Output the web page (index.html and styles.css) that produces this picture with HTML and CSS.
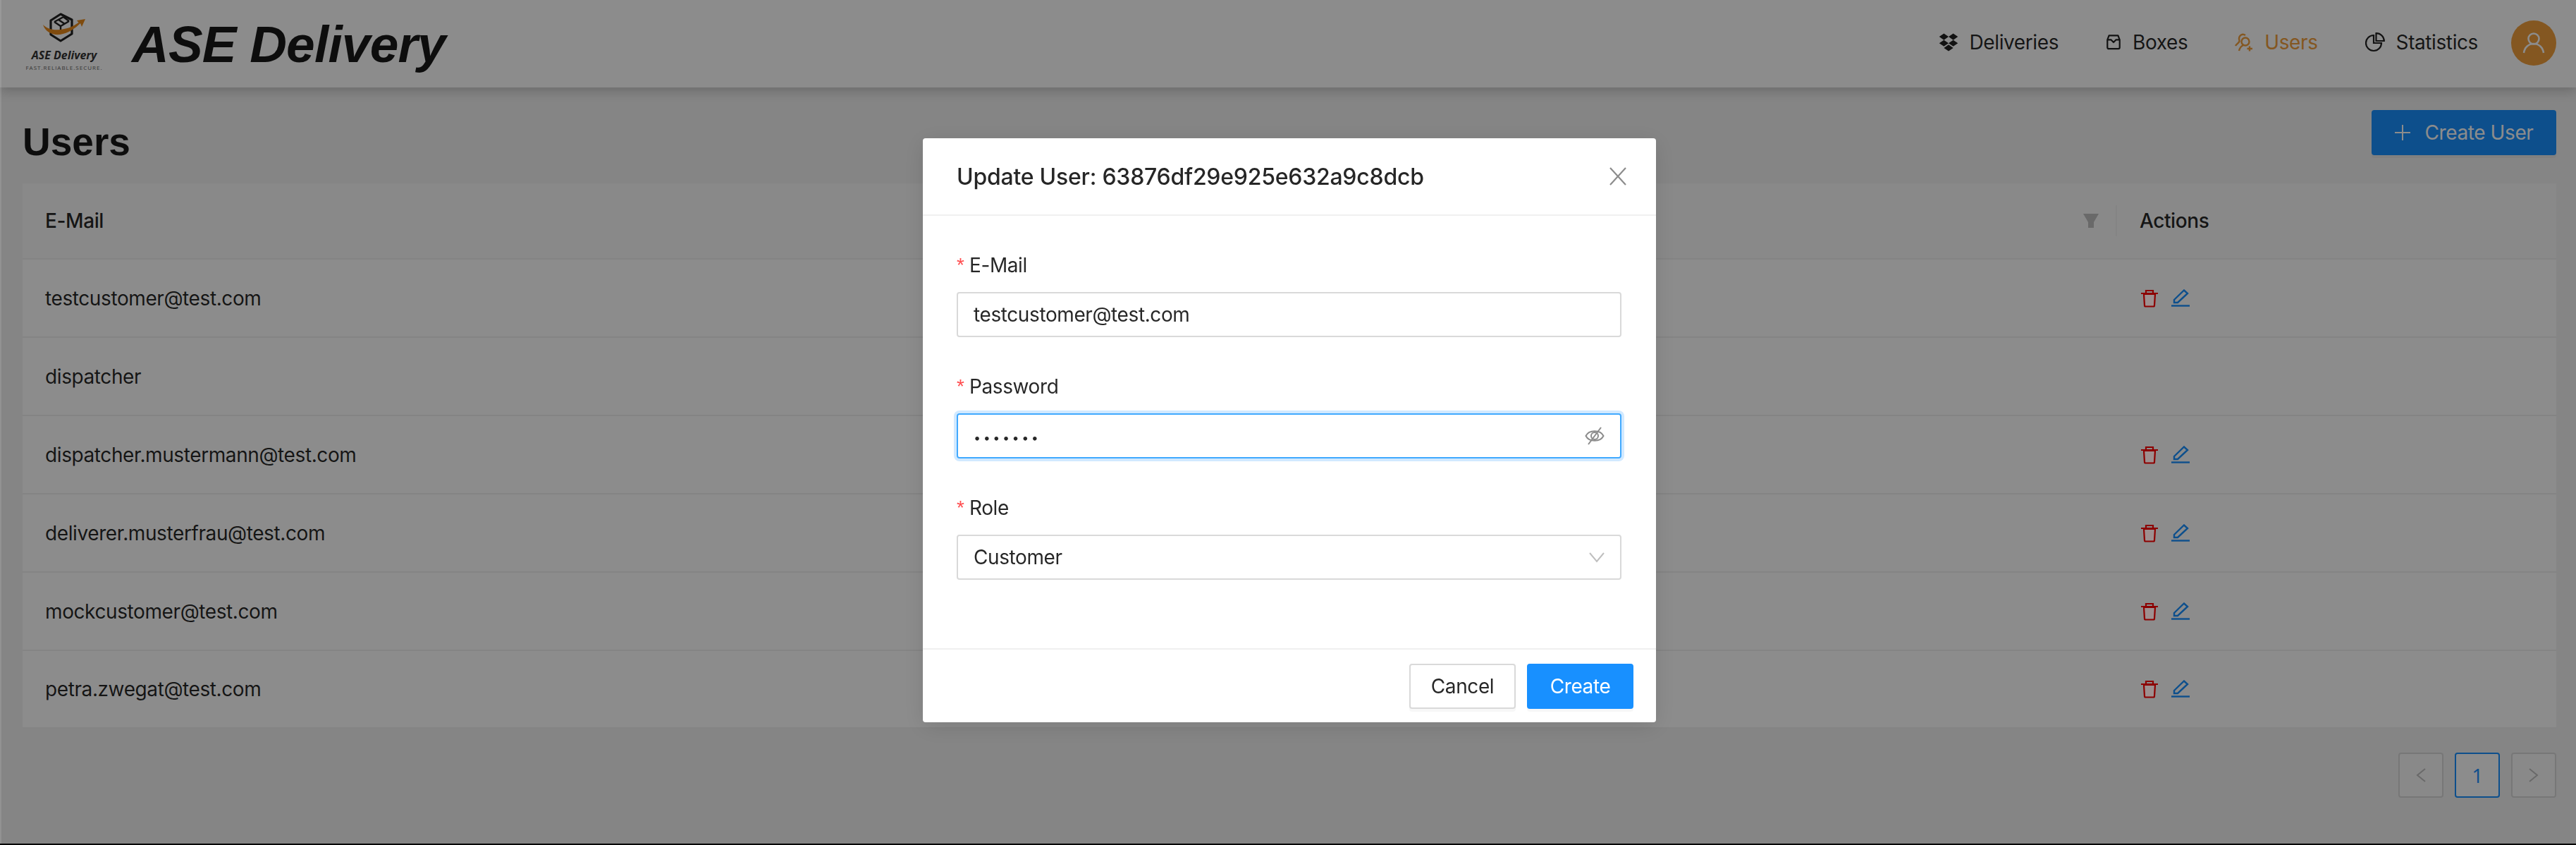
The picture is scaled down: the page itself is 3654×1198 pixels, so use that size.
FILE: index.html
```html
<!DOCTYPE html>
<html lang="en">
<head>
<meta charset="utf-8">
<title>ASE Delivery</title>
<link rel="stylesheet" href="styles.css">
</head>
<body>
<div class="app">
  <header class="topbar">
    <div class="brand">
      <div class="logo">
        <svg class="logo-mark" width="66" height="46" viewBox="0 0 66 46">
          <path d="M27 4 L43 12 L43 32 L27 42 L13 33 L13 13 Z" fill="none" stroke="#222" stroke-width="3.2" stroke-linejoin="round"/>
          <path d="M18 15 L31 8 M18 15 L27 21 L39 14 M27 21 L27 27 M31 8 L39 14 M24 12 L33 18" fill="none" stroke="#222" stroke-width="2.4"/>
          <path d="M2 19 C5 29 15 34 26 33 C38 31 48 24 55 17 L57 22 L62 11 L50 13 L52.500 16 C44 22 36 25 26 26 C16 27 8 25 2 19 Z" fill="#e8891a"/>
        </svg>
        <span class="logo-name">ASE Delivery</span>
        <span class="logo-tag">FAST.RELIABLE.SECURE.</span>
      </div>
      <h1 class="app-title">ASE Delivery</h1>
    </div>
    <nav class="nav">
      <a class="nav-item">
        <svg class="nav-icon" width="28" height="26" viewBox="0.500 1 27 25.500"><path d="M7.5 1.5 L14 6 L7.5 10.5 L1 6 Z M20.5 1.5 L27 6 L20.5 10.5 L14 6 Z M7.5 10.5 L14 15 L7.5 19.5 L1 15 Z M20.5 10.5 L27 15 L20.5 19.5 L14 15 Z M14 17 L20.5 21.5 L14 26 L7.5 21.5 Z" fill="#222"/></svg>
        <span>Deliveries</span>
      </a>
      <a class="nav-item">
        <svg class="nav-icon" width="22" height="22" viewBox="0 0 22 24"><path d="M4 1.5 H18 L20.5 8 V20 a2 2 0 0 1 -2 2 H3.500 a2 2 0 0 1 -2 -2 V8 Z M1.500 8 H7 L11 12 L15 8 H20.500" fill="none" stroke="#222" stroke-width="2.400" stroke-linejoin="round"/></svg>
        <span>Boxes</span>
      </a>
      <a class="nav-item nav-item-active">
        <svg class="nav-icon" width="26" height="26" viewBox="0 0 26 26"><circle cx="15" cy="12" r="5.500" fill="none" stroke="#f09e3c" stroke-width="2.400"/><path d="M1 18 C4 13 8 14 6 8 C6 3 11 0 15 3 M6 25 C7 21 10 18 12 17 M17.500 22 H25 M21 18.500 V25.500" fill="none" stroke="#f09e3c" stroke-width="2.400"/></svg>
        <span>Users</span>
      </a>
      <a class="nav-item nav-item-last">
        <svg class="nav-icon" width="28" height="28" viewBox="0 0 28 28"><path d="M12 4 A11 11 0 1 0 23 15 H12 Z" fill="none" stroke="#222" stroke-width="2.200"/><path d="M15.500 1.200 A11 11 0 0 1 26.800 12 H15.500 Z" fill="none" stroke="#222" stroke-width="2.200"/></svg>
        <span>Statistics</span>
      </a>
      <span class="avatar">
        <svg width="32" height="32" viewBox="0 0 32 32"><circle cx="16" cy="10" r="7.500" fill="none" stroke="#fff" stroke-width="2.600"/><path d="M2 30 C3 22 9 17 16 17 C23 17 29 22 30 30" fill="none" stroke="#fff" stroke-width="2.600"/></svg>
      </span>
    </nav>
  </header>

  <main class="content">
    <div class="title-row">
      <h2 class="page-title">Users</h2>
      <button class="btn btn-primary btn-create">
        <svg width="24" height="24" viewBox="0 0 24 24"><path d="M12 1 V23 M1 12 H23" stroke="#fff" stroke-width="2" fill="none"/></svg>
        <span>Create User</span>
      </button>
    </div>

    <div class="table">
      <div class="row row-head">
        <div class="cell-main">E-Mail</div>
        <svg class="filter" width="22" height="20" viewBox="0 0 22 20"><path d="M0 0 H22 L15 12 V20 H7 V12 Z" fill="#bfbfbf"/></svg>
        <div class="cell-actions cell-actions-head">Actions</div>
      </div>

      <div class="row">
        <div class="cell-main">testcustomer@test.com</div>
        <div class="cell-actions">
          <svg class="i-del" width="26" height="26" viewBox="0 0 26 26"><path d="M5 7 H21 L20 23 a1.500 1.500 0 0 1 -1.500 1.500 H7.500 A1.500 1.500 0 0 1 6 23 Z" fill="#9e9090" stroke="#8c0000" stroke-width="2.200"/><path d="M1 6 H25 M8 6 V2 H18 V6" fill="none" stroke="#8c0000" stroke-width="2.200"/></svg>
          <svg class="i-edit" width="26" height="26" viewBox="0 0 26 26"><path d="M4 15 L18 1.500 L23 6 L9 19 L4 19 Z" fill="none" stroke="#1890ff" stroke-width="2.400"/><path d="M0 23.500 H26" stroke="#1890ff" stroke-width="2.400"/></svg>
        </div>
      </div>
      <div class="row">
        <div class="cell-main">dispatcher</div>
        <div class="cell-actions"></div>
      </div>
      <div class="row">
        <div class="cell-main">dispatcher.mustermann@test.com</div>
        <div class="cell-actions">
          <svg class="i-del" width="26" height="26" viewBox="0 0 26 26"><path d="M5 7 H21 L20 23 a1.500 1.500 0 0 1 -1.500 1.500 H7.500 A1.500 1.500 0 0 1 6 23 Z" fill="#9e9090" stroke="#8c0000" stroke-width="2.200"/><path d="M1 6 H25 M8 6 V2 H18 V6" fill="none" stroke="#8c0000" stroke-width="2.200"/></svg>
          <svg class="i-edit" width="26" height="26" viewBox="0 0 26 26"><path d="M4 15 L18 1.500 L23 6 L9 19 L4 19 Z" fill="none" stroke="#1890ff" stroke-width="2.400"/><path d="M0 23.500 H26" stroke="#1890ff" stroke-width="2.400"/></svg>
        </div>
      </div>
      <div class="row">
        <div class="cell-main">deliverer.musterfrau@test.com</div>
        <div class="cell-actions">
          <svg class="i-del" width="26" height="26" viewBox="0 0 26 26"><path d="M5 7 H21 L20 23 a1.500 1.500 0 0 1 -1.500 1.500 H7.500 A1.500 1.500 0 0 1 6 23 Z" fill="#9e9090" stroke="#8c0000" stroke-width="2.200"/><path d="M1 6 H25 M8 6 V2 H18 V6" fill="none" stroke="#8c0000" stroke-width="2.200"/></svg>
          <svg class="i-edit" width="26" height="26" viewBox="0 0 26 26"><path d="M4 15 L18 1.500 L23 6 L9 19 L4 19 Z" fill="none" stroke="#1890ff" stroke-width="2.400"/><path d="M0 23.500 H26" stroke="#1890ff" stroke-width="2.400"/></svg>
        </div>
      </div>
      <div class="row">
        <div class="cell-main">mockcustomer@test.com</div>
        <div class="cell-actions">
          <svg class="i-del" width="26" height="26" viewBox="0 0 26 26"><path d="M5 7 H21 L20 23 a1.500 1.500 0 0 1 -1.500 1.500 H7.500 A1.500 1.500 0 0 1 6 23 Z" fill="#9e9090" stroke="#8c0000" stroke-width="2.200"/><path d="M1 6 H25 M8 6 V2 H18 V6" fill="none" stroke="#8c0000" stroke-width="2.200"/></svg>
          <svg class="i-edit" width="26" height="26" viewBox="0 0 26 26"><path d="M4 15 L18 1.500 L23 6 L9 19 L4 19 Z" fill="none" stroke="#1890ff" stroke-width="2.400"/><path d="M0 23.500 H26" stroke="#1890ff" stroke-width="2.400"/></svg>
        </div>
      </div>
      <div class="row row-last">
        <div class="cell-main">petra.zwegat@test.com</div>
        <div class="cell-actions">
          <svg class="i-del" width="26" height="26" viewBox="0 0 26 26"><path d="M5 7 H21 L20 23 a1.500 1.500 0 0 1 -1.500 1.500 H7.500 A1.500 1.500 0 0 1 6 23 Z" fill="#9e9090" stroke="#8c0000" stroke-width="2.200"/><path d="M1 6 H25 M8 6 V2 H18 V6" fill="none" stroke="#8c0000" stroke-width="2.200"/></svg>
          <svg class="i-edit" width="26" height="26" viewBox="0 0 26 26"><path d="M4 15 L18 1.500 L23 6 L9 19 L4 19 Z" fill="none" stroke="#1890ff" stroke-width="2.400"/><path d="M0 23.500 H26" stroke="#1890ff" stroke-width="2.400"/></svg>
        </div>
      </div>
    </div>

    <div class="pagination">
      <span class="page-btn page-disabled"><svg width="16" height="22" viewBox="0 0 16 22"><path d="M14 2 L3 11 L14 20" fill="none" stroke="#bfbfbf" stroke-width="2"/></svg></span>
      <span class="page-btn page-current">1</span>
      <span class="page-btn page-disabled"><svg width="16" height="22" viewBox="0 0 16 22"><path d="M2 2 L13 11 L2 20" fill="none" stroke="#bfbfbf" stroke-width="2"/></svg></span>
    </div>
  </main>
</div>

<div class="mask">
  <section class="modal">
    <div class="modal-head">
      <span class="modal-title">Update User: 63876df29e925e632a9c8dcb</span>
      <svg width="24" height="26" viewBox="0 0 24 26"><path d="M1 1 L23 25 M23 1 L1 25" stroke="#8c8c8c" stroke-width="2.200" fill="none"/></svg>
    </div>
    <div class="modal-body">
      <div class="field">
        <label class="field-label"><span class="req">*</span>E-Mail</label>
        <div class="input">testcustomer@test.com</div>
      </div>
      <div class="field">
        <label class="field-label"><span class="req">*</span>Password</label>
        <div class="input input-focus">
          <span class="dots">•••••••</span>
          <svg width="28" height="26" viewBox="0 0 28 26"><path d="M1.500 13 C6 4 22 4 26.500 13 C22 22 6 22 1.500 13 Z" fill="none" stroke="#8c8c8c" stroke-width="2"/><circle cx="14" cy="13" r="5" fill="none" stroke="#8c8c8c" stroke-width="2"/><path d="M23 1 L5 25" stroke="#8c8c8c" stroke-width="2"/></svg>
        </div>
      </div>
      <div class="field">
        <label class="field-label"><span class="req">*</span>Role</label>
        <div class="input">
          <span>Customer</span>
          <svg width="22" height="16" viewBox="0 0 22 16"><path d="M1 2 L11 14 L21 2" fill="none" stroke="#bfbfbf" stroke-width="2"/></svg>
        </div>
      </div>
    </div>
    <div class="modal-foot">
      <button class="btn btn-default">Cancel</button>
      <button class="btn btn-primary">Create</button>
    </div>
  </section>
</div>
</body>
</html>
```
FILE: styles.css
```css
* { box-sizing: border-box; }
html { background: #000; height: 100%; }
body {
  margin: 0;
  height: 1196px;
  overflow: hidden;
  background: #f2f2f2;
  color: rgba(0,0,0,.85);
  font-family: Inter, "Liberation Sans", sans-serif;
  font-size: 28px;
  letter-spacing: -0.4px;
}
body::after {
  content: "";
  position: fixed;
  left: 0; top: 0; bottom: 2px;
  width: 2px;
  background: rgba(255,255,255,.1);
}
.app { height: 100%; }

.topbar {
  height: 124px;
  background: #fff;
  box-shadow: 0 4px 16px rgba(0,0,0,.22);
  display: flex;
  align-items: center;
  justify-content: space-between;
  padding: 0 28px 0 36px;
  position: relative;
}
.brand { display: flex; align-items: center; gap: 41px; }
.logo { width: 110px; margin-bottom: 8px; display: flex; flex-direction: column; align-items: center; letter-spacing: 0; }
.logo-mark { margin-left: 2px; }
.logo-name { font: italic 700 16px/20px "Open Sans", sans-serif; color: #333; margin-top: 6px; }
.logo-tag { font: 400 8px/10px "Open Sans", sans-serif; letter-spacing: 1px; color: #666; margin-top: 3px; white-space: nowrap; }
.app-title {
  margin: 0;
  font: italic 700 73px/88px "Liberation Sans", sans-serif;
  letter-spacing: -0.8px;
  color: rgba(0,0,0,.9);
  padding-top: 2px;
}
.nav { display: flex; align-items: center; margin-top: -2px; }
.nav-item { display: flex; align-items: center; gap: 16px; margin-right: 67px; margin-bottom: 3px; }
.nav-item-active { color: #f09e3c; }
.nav-item-last { margin-right: 47px; }
.nav-icon { flex: none; }
.avatar {
  width: 64px; height: 64px; border-radius: 50%;
  background: #f09e3c;
  display: flex; align-items: center; justify-content: center;
}

.content { padding: 32px 28px 0 32px; }
.title-row { height: 64px; display: flex; align-items: center; justify-content: space-between; margin-bottom: 40px; }
.page-title { margin: 26px 0 0; font: 700 55px/64px "Liberation Sans", sans-serif; letter-spacing: 0; color: rgba(0,0,0,.9); }

.btn {
  height: 64px;
  border-radius: 4px;
  font: inherit;
  letter-spacing: inherit;
  white-space: nowrap;
  display: inline-flex; align-items: center; justify-content: center;
  gap: 19px;
  box-shadow: 0 4px 0 rgba(0,0,0,.03);
  padding: 0;
}
.btn-primary { background: #1890ff; border: 2px solid #1890ff; color: #fff; }
.btn-default { background: #fff; border: 2px solid #d9d9d9; color: rgba(0,0,0,.85); }
.btn-create { width: 262px; }

.table { background: #fff; }
.row { display: flex; align-items: center; height: 111px; border-bottom: 2px solid #f0f0f0; }
.row-head { height: 108px; background: #fafafa; font-weight: 500; }
.row-last { height: 110px; }
.cell-main { flex: 1; padding-left: 32px; }
.cell-actions { width: 625px; padding-left: 35px; display: flex; align-items: center; gap: 18px; }
.cell-actions-head { border-left: 2px solid #f0f0f0; height: 44px; padding-left: 32px; }
.filter { margin-right: 24px; }
.i-del { position: relative; z-index: 1; }

.pagination { display: flex; justify-content: flex-end; gap: 16px; margin-top: 34px; }
.page-btn {
  width: 64px; height: 64px; border: 2px solid #d9d9d9; border-radius: 4px;
  background: #fff;
  display: flex; align-items: center; justify-content: center;
  font-family: "Open Sans", sans-serif;
}
.page-current { border-color: #1890ff; color: #1890ff; font-weight: 500; }
.page-disabled { background: #fafafa; }

.mask { position: fixed; inset: 0; background: rgba(0,0,0,.45); }
.modal {
  position: absolute; left: 1309px; top: 196px;
  width: 1040px; height: 828px;
  background: #fff; border-radius: 4px;
  display: flex; flex-direction: column;
  box-shadow: 0 6px 32px rgba(0,0,0,.12);
}
.modal-head {
  height: 110px; padding: 0 42px 0 48px;
  border-bottom: 2px solid #f0f0f0;
  display: flex; align-items: center; justify-content: space-between;
}
.modal-title { font-size: 32px; font-weight: 500; letter-spacing: -0.25px; }
.modal-body { flex: 1; padding: 48px 49px 0 48px; display: flex; flex-direction: column; gap: 48px; }
.field { display: flex; flex-direction: column; gap: 16px; }
.field-label { height: 44px; display: flex; align-items: center; }
.req { color: #ff4d4f; width: 18px; font-family: "Liberation Sans", sans-serif; }
.input {
  height: 64px; border: 2px solid #d9d9d9; border-radius: 4px;
  padding: 0 22px;
  display: flex; align-items: center; justify-content: space-between;
}
.input-focus { border-color: #40a9ff; box-shadow: 0 0 0 4px rgba(24,144,255,.2); }
.dots { font-size: 18px; letter-spacing: 3.500px; padding-top: 4px; }
.modal-foot { height: 105px; border-top: 2px solid #f0f0f0; padding: 0 32px; display: flex; align-items: center; justify-content: flex-end; gap: 16px; }
.modal-foot .btn { width: 151px; }
```
